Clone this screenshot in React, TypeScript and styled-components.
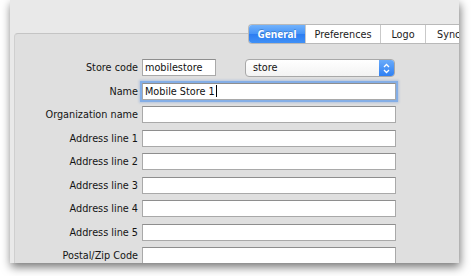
import React from "react";
import styled, { createGlobalStyle } from "styled-components";

const GlobalStyle = createGlobalStyle`
  html, body {
    margin: 0;
    padding: 0;
    background: #ffffff;
    overflow: hidden;
  }
  body {
    font-family: "DejaVu Sans", "Liberation Sans", sans-serif;
  }
`;

const Stage = styled.div`
  width: 471px;
  height: 276px;
  padding-left: 10px;
  box-sizing: border-box;
`;

const Window = styled.div`
  width: 449px;
  height: 263px;
  background: #e9e9e9;
  box-shadow: 1px 4px 9px rgba(0, 0, 0, 0.55);
  padding: 33px 0 0 4px;
  box-sizing: border-box;
  overflow: hidden;
`;

const Panel = styled.div`
  position: relative;
  height: 230px;
  background: #dfdfdf;
  border-top: 1px solid #c4c4c4;
  border-left: 1px solid #cfcfcf;
  border-top-left-radius: 4px;
  box-sizing: border-box;
`;

const TabBar = styled.div`
  position: absolute;
  top: -10px;
  left: 233px;
  display: flex;
  height: 18px;
  border: 1px solid #b9b9b9;
  border-right: none;
  border-radius: 4px 0 0 4px;
  overflow: hidden;
  background: #ffffff;
`;

const Tab = styled.div<{ $active?: boolean; $last?: boolean; $width: number }>`
  width: ${(p) => p.$width}px;
  display: flex;
  align-items: center;
  justify-content: ${(p) => (p.$last ? "flex-start" : "center")};
  padding-left: ${(p) => (p.$last ? "11px" : "0")};
  font-family: ${(p) =>
    p.$active ? `"Noto Sans", "DejaVu Sans", sans-serif` : `"DejaVu Sans", sans-serif`};
  font-size: ${(p) => (p.$active ? "10px" : "9.7px")};
  font-weight: ${(p) => (p.$active ? 700 : 400)};
  color: ${(p) => (p.$active ? "#ffffff" : "#1a1a1a")};
  background: ${(p) =>
    p.$active
      ? "linear-gradient(to bottom, #72b2fb 0%, #4593f7 50%, #2c7df2 52%, #3f90f6 100%)"
      : "#ffffff"};
  border-left: ${(p) => (p.$active ? "none" : "1px solid #c9c9c9")};
  box-sizing: border-box;
  text-shadow: ${(p) => (p.$active ? "0 -1px 0 rgba(0,0,0,0.2)" : "none")};
  white-space: nowrap;
  overflow: hidden;
  flex-shrink: 0;
`;

const Form = styled.div`
  display: grid;
  grid-template-columns: 126px auto;
  column-gap: 1px;
  row-gap: 6.5px;
  padding-top: 25px;
  align-items: center;
`;

const Label = styled.div`
  font-size: 9.7px;
  color: #141414;
  text-align: right;
  white-space: nowrap;
  line-height: 17px;
  padding-right: 3px;
`;

const FieldRow = styled.div`
  display: flex;
  align-items: center;
  gap: 29px;
  height: 17px;
`;

const TextBox = styled.div<{ $width: number; $focused?: boolean }>`
  width: ${(p) => p.$width}px;
  height: 17px;
  box-sizing: border-box;
  background: #ffffff;
  border: 1px solid #a9a9a9;
  border-top-color: #8e8e8e;
  font-size: 9.7px;
  color: #111;
  padding-left: 2px;
  line-height: 15px;
  white-space: nowrap;
  box-shadow: ${(p) =>
    p.$focused ? "0 0 0 2px #84aee6, 0 0 2px 3px rgba(120,160,220,0.4)" : "none"};
`;

const Caret = styled.span`
  display: inline-block;
  width: 1px;
  height: 12px;
  background: #000;
  vertical-align: -2px;
  margin-left: 1px;
`;

const Select = styled.div`
  width: 150px;
  height: 18px;
  box-sizing: border-box;
  display: flex;
  align-items: stretch;
  border: 1px solid #a8a8a8;
  border-radius: 4px;
  background: linear-gradient(to bottom, #ffffff, #f3f3f3);
  overflow: hidden;
  margin-top: 1px;
`;

const SelectText = styled.div`
  flex: 1;
  font-size: 9.7px;
  color: #111;
  padding-left: 7px;
  line-height: 16px;
`;

const Stepper = styled.div`
  width: 15px;
  display: flex;
  align-items: center;
  justify-content: center;
  background: linear-gradient(to bottom, #6aabfa, #2f80f3);
`;

const rows = [
  "Organization name",
  "Address line 1",
  "Address line 2",
  "Address line 3",
  "Address line 4",
  "Address line 5",
  "Postal/Zip Code",
];

const App = () => {
  return (
    <>
      <GlobalStyle />
      <Stage>
        <Window>
          <Panel>
            <TabBar>
              <Tab $active $width={56}>General</Tab>
              <Tab $width={75}>Preferences</Tab>
              <Tab $width={45}>Logo</Tab>
              <Tab $width={60} $last>Synchronise</Tab>
            </TabBar>
            <Form>
              <Label>Store code</Label>
              <FieldRow>
                <TextBox $width={74}>mobilestore</TextBox>
                <Select>
                  <SelectText>store</SelectText>
                  <Stepper>
                    <svg width="7" height="11" viewBox="0 0 7 11">
                      <path d="M1 4 L3.5 1.5 L6 4" fill="none" stroke="#fff" strokeWidth="1.3" />
                      <path d="M1 7 L3.5 9.5 L6 7" fill="none" stroke="#fff" strokeWidth="1.3" />
                    </svg>
                  </Stepper>
                </Select>
              </FieldRow>
              <Label>Name</Label>
              <FieldRow>
                <TextBox $width={254} $focused>
                  Mobile Store 1<Caret />
                </TextBox>
              </FieldRow>
              {rows.map((r) => (
                <React.Fragment key={r}>
                  <Label>{r}</Label>
                  <FieldRow>
                    <TextBox $width={254} />
                  </FieldRow>
                </React.Fragment>
              ))}
            </Form>
          </Panel>
        </Window>
      </Stage>
    </>
  );
};

export default App;
